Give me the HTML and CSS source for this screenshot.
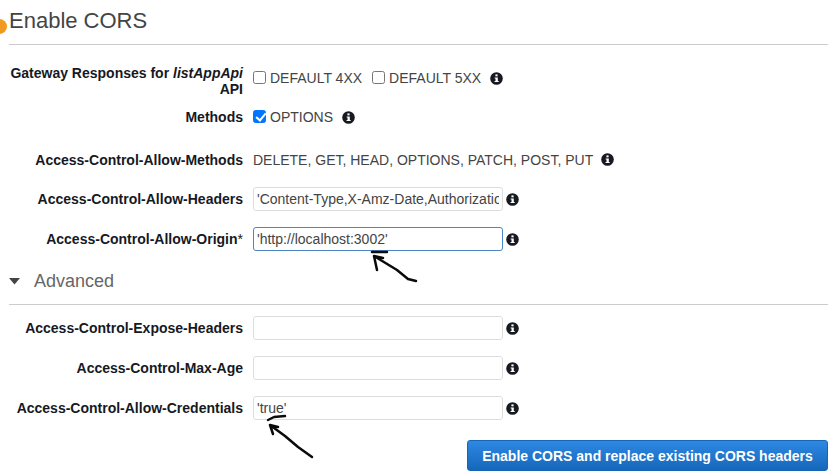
FILE: index.html
```html
<!DOCTYPE html>
<html lang="en">
<head>
<meta charset="utf-8">
<title>Enable CORS</title>
<link rel="stylesheet" href="styles.css">
</head>
<body>
<span class="dot"></span>
<main class="page">
  <h1 class="title">Enable CORS</h1>
  <form class="form">
    <div class="row row-gateway">
      <div class="label">Gateway Responses for <em>listAppApi</em> API</div>
      <div class="control control-top">
        <label class="check"><input type="checkbox"> DEFAULT 4XX</label>
        <label class="check"><input type="checkbox"> DEFAULT 5XX</label>
        <svg class="info info-wide" viewBox="0 0 12 12"><use href="#i"/></svg>
      </div>
    </div>
    <div class="row row-methods">
      <div class="label">Methods</div>
      <div class="control">
        <label class="check"><input type="checkbox" checked> OPTIONS</label>
        <svg class="info info-wide" viewBox="0 0 12 12"><use href="#i"/></svg>
      </div>
    </div>
    <div class="row row-list">
      <div class="label">Access-Control-Allow-Methods</div>
      <div class="control"><span class="plain">DELETE, GET, HEAD, OPTIONS, PATCH, POST, PUT</span>
        <svg class="info" viewBox="0 0 12 12"><use href="#i"/></svg></div>
    </div>
    <div class="row">
      <div class="label">Access-Control-Allow-Headers</div>
      <div class="control"><input class="field" type="text" value="'Content-Type,X-Amz-Date,Authorization,X-Api-Key'">
        <svg class="info" viewBox="0 0 12 12"><use href="#i"/></svg></div>
    </div>
    <div class="row">
      <div class="label">Access-Control-Allow-Origin<span class="star">*</span></div>
      <div class="control"><input class="field field-focus" type="text" value="'http://localhost:3002'">
        <svg class="info" viewBox="0 0 12 12"><use href="#i"/></svg></div>
    </div>
    <div class="advanced">
      <svg class="caret" viewBox="0 0 11 7"><path d="M0 0h11L5.500 6.500z"/></svg>
      <h2 class="advanced-title">Advanced</h2>
    </div>
    <div class="row row-first">
      <div class="label">Access-Control-Expose-Headers</div>
      <div class="control"><input class="field" type="text" value="">
        <svg class="info" viewBox="0 0 12 12"><use href="#i"/></svg></div>
    </div>
    <div class="row">
      <div class="label">Access-Control-Max-Age</div>
      <div class="control"><input class="field" type="text" value="">
        <svg class="info" viewBox="0 0 12 12"><use href="#i"/></svg></div>
    </div>
    <div class="row">
      <div class="label">Access-Control-Allow-Credentials</div>
      <div class="control"><input class="field" type="text" value="'true'">
        <svg class="info" viewBox="0 0 12 12"><use href="#i"/></svg></div>
    </div>
    <div class="actions"><button class="btn" type="button">Enable CORS and replace existing CORS headers</button></div>
  </form>
</main>
<svg class="ink" viewBox="0 0 834 475" width="834" height="475" aria-hidden="true">
  <g fill="none" stroke="#0a0a0a" stroke-width="2.500" stroke-linecap="round" stroke-linejoin="round">
    <path d="M372 252h15"/>
    <path d="M377 270 374 256 383 258M374 256 397 270 408 279 416 281"/>
    <path d="M268 420 274 417 285 416"/>
    <path d="M273 434 270 425 278 427M270 425 285 436 298 447 312 457"/>
  </g>
</svg>
<svg class="defs" width="0" height="0" aria-hidden="true">
  <defs>
    <g id="i"><circle cx="6" cy="6" r="5.800" fill="#16191f"/><rect x="5" y="2.200" width="2" height="1.800" fill="#fff"/><path d="M4.300 5h2.900v3.300h.8v1H4.200v-1h.9V6h-.8z" fill="#fff"/></g>
  </defs>
</svg>
</body>
</html>
```
FILE: styles.css
```css
* { box-sizing: border-box; }
html, body { margin: 0; padding: 0; }
body {
  width: 834px;
  height: 475px;
  overflow: hidden;
  background: #fff;
  font-family: "Liberation Sans", Arial, sans-serif;
  font-size: 14px;
  color: #444;
  position: relative;
}
.page { padding: 0 6px 0 9px; }
.title {
  margin: 0;
  height: 45px;
  padding: 8px 0 0;
  font-size: 22px;
  line-height: 25px;
  font-weight: 400;
  color: #444;
  border-bottom: 1px solid #ccc;
}
.form { display: block; }
.row { display: flex; align-items: center; height: 40px; }
.row-gateway { height: 52px; margin-top: 20px; align-items: flex-start; }
.row-methods { height: 30px; margin-top: -15px; }
.row-list { margin-top: 8px; height: 39px; }
.row-first { margin-top: 3px; }
.label {
  width: 234px;
  flex: none;
  text-align: right;
  font-weight: 700;
  line-height: 16px;
  color: #16191f;
}
.star { font-weight: 400; }
.control { display: flex; align-items: center; margin-left: 10px; }
.control-top { margin-top: 5px; }
.check { display: inline-flex; align-items: center; margin-right: 10px; gap: 4px; }
.check input {
  appearance: none;
  width: 13px;
  height: 13px;
  margin: 0;
  border: 1px solid #767676;
  border-radius: 2.500px;
  background: #fff;
  position: relative;
  top: -1px;
}
.check input:checked {
  background: #0075ff;
  border-color: #0075ff;
}
.check input:checked::after {
  content: "";
  position: absolute;
  left: 3.500px;
  top: .5px;
  width: 4px;
  height: 8px;
  border: solid #fff;
  border-width: 0 2px 2px 0;
  transform: rotate(40deg);
}
.plain { margin-right: 5px; }
.field {
  width: 250px;
  height: 24px;
  padding: 0 3px;
  border: 1px solid #ddd;
  border-radius: 3px;
  font: 14px "Liberation Sans", Arial, sans-serif;
  color: #444;
  background: #fff;
  outline: none;
}
.field-focus { border-color: #4a87c4; }
.info { width: 13px; height: 13px; margin-left: 3px; flex: none; }
.info-wide { margin-left: -1px; }
.advanced {
  display: flex;
  align-items: center;
  height: 46px;
  border-bottom: 1px solid #ccc;
}
.caret { width: 11px; height: 7px; margin-right: 14px; fill: #444; }
.advanced-title { margin: 0; font-size: 18px; font-weight: 400; color: #666; }
.actions { display: flex; justify-content: flex-end; margin-top: 12px; }
.btn {
  width: 361px;
  height: 31px;
  padding: 0;
  border: 1px solid #1566b7;
  border-radius: 3px;
  background: linear-gradient(#2f88e4, #1567b9);
  color: #fff;
  font: 700 14px "Liberation Sans", Arial, sans-serif;
}
.dot {
  position: absolute;
  left: -8px;
  top: 19px;
  width: 15px;
  height: 15px;
  border-radius: 50%;
  background: #f29a1f;
}
.ink { position: absolute; left: 0; top: 0; pointer-events: none; }
.defs { position: absolute; }
```
